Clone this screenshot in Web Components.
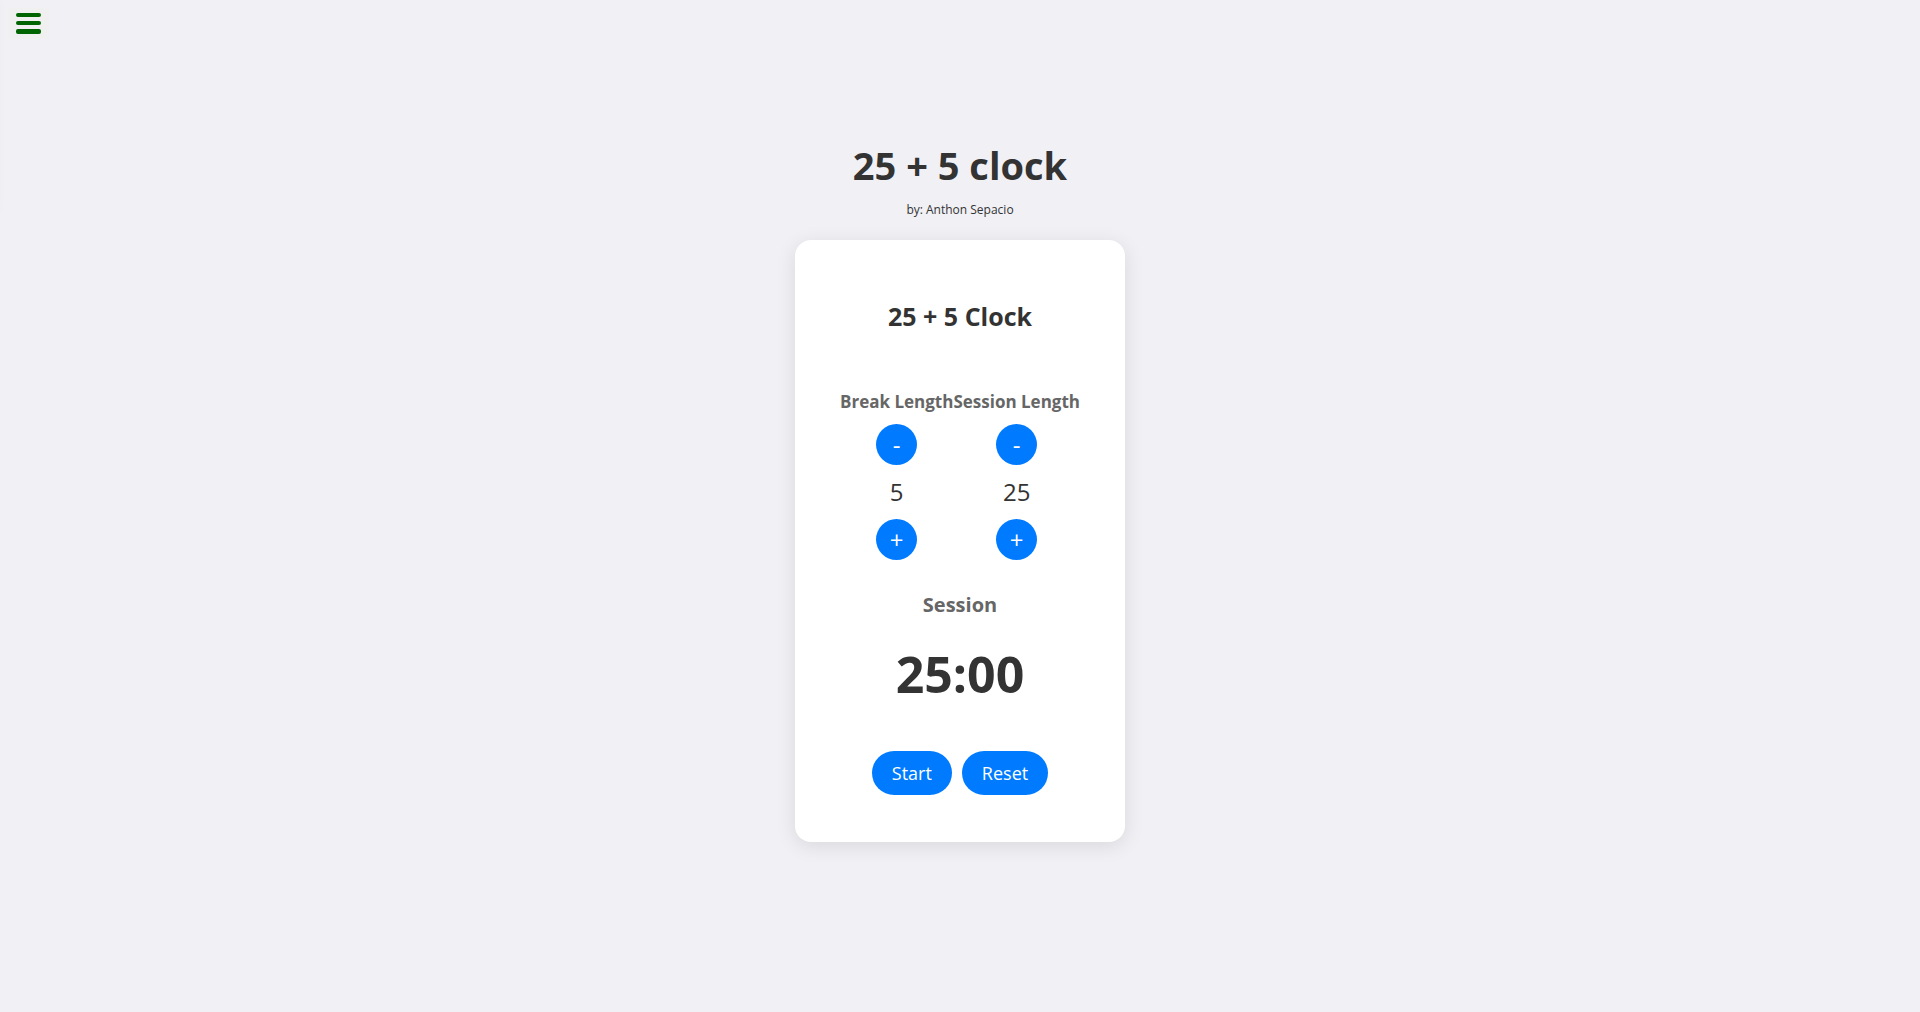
<!DOCTYPE html>
<html lang="en">
<head>
<meta charset="utf-8">
<title>25 + 5 clock</title>
<style>
  body { margin: 0; background: #f0f0f5; color: #333; font-family: "Open Sans", "Noto Sans", sans-serif; }
</style>
</head>
<body>
<clock-app></clock-app>
<script>
const define = (name, html, setup) => {
  const template = document.createElement('template');
  template.innerHTML = html;
  customElements.define(name, class extends HTMLElement {
    connectedCallback() {
      if (this.shadowRoot) return;
      this.attachShadow({ mode: 'open' }).append(template.content.cloneNode(true));
      if (setup) setup(this, this.shadowRoot);
    }
  });
};

define('menu-toggle', `
  <style>
    :host { display: block; }
    button { display: flex; padding: 5px 8px; border: 0; background: #f0f0f0; cursor: pointer; }
    svg { display: block; }
    .drawer { position: fixed; top: 0; right: 100%; width: 200px; height: 212px; box-shadow: 0 0 10px rgba(0,0,0,.02); }
  </style>
  <button type="button" aria-label="Menu">
    <svg width="25" height="21" viewBox="0 0 25 21" fill="#006400">
      <rect width="25" height="4" rx="2"/><rect y="8" width="25" height="4" rx="2"/><rect y="16" width="25" height="5" rx="2"/>
    </svg>
  </button>
  <div class="drawer"></div>`);

define('round-button', `
  <style>
    :host { display: block; }
    button { width: 41px; height: 41px; padding: 0; border: 0; border-radius: 50%; background: #007bff; color: #fff; font: 24px/41px "Open Sans", sans-serif; cursor: pointer; }
  </style>
  <button type="button"><slot></slot></button>`, (el, root) =>
    root.querySelector('button').setAttribute('aria-label', el.getAttribute('label')));

define('pill-button', `
  <style>
    :host { display: block; }
    button { padding: 0 20px; border: 0; border-radius: 22px; background: #007bff; color: #fff; font: 18px/44px "Open Sans", sans-serif; cursor: pointer; }
  </style>
  <button type="button"><slot></slot></button>`);

define('length-control', `
  <style>
    :host { display: flex; flex-direction: column; align-items: center; gap: 10px; }
    h3 { margin: 0; color: #666; font-size: 17px; line-height: 25px; white-space: nowrap; }
    .value { font-size: 24px; line-height: 34px; }
  </style>
  <h3><slot name="label"></slot></h3>
  <round-button label="Decrease">-</round-button>
  <div class="value"><slot></slot></div>
  <round-button label="Increase">+</round-button>`);

define('clock-card', `
  <style>
    :host { display: flex; flex-direction: column; align-items: center; box-sizing: border-box; width: 330px; max-width: 100%; padding: 58px 40px 47px; border-radius: 16px; background: #fff; box-shadow: 0 4px 20px rgba(0,0,0,.1); }
    h2 { margin: 0 0 55px; font-size: 25px; line-height: 36px; }
    .lengths { display: flex; justify-content: center; margin-bottom: 31px; }
    h3 { margin: 0 0 23px; color: #666; font-size: 20px; line-height: 28px; }
    .time { margin-bottom: 45px; font-size: 50px; line-height: 64px; font-weight: 700; }
    .actions { display: flex; gap: 10px; }
  </style>
  <h2>25 + 5 Clock</h2>
  <div class="lengths">
    <length-control><span slot="label">Break Length</span>5</length-control>
    <length-control><span slot="label">Session Length</span>25</length-control>
  </div>
  <h3>Session</h3>
  <div class="time" role="timer">25:00</div>
  <div class="actions"><pill-button>Start</pill-button><pill-button>Reset</pill-button></div>`);

define('clock-app', `
  <style>
    :host { display: flex; flex-direction: column; min-height: 100vh; }
    header { padding: 8px 8px 0; display: flex; height: 31px; }
    main { flex: 1; display: flex; flex-direction: column; align-items: center; justify-content: center; padding-bottom: 71px; }
    h1 { margin: 0 0 9px; font-size: 38px; line-height: 54px; }
    p { margin: 0 0 21px; font-size: 12px; line-height: 18px; }
  </style>
  <header><menu-toggle></menu-toggle></header>
  <main>
    <h1>25 + 5 clock</h1>
    <p>by: Anthon Sepacio</p>
    <clock-card></clock-card>
  </main>`);
</script>
</body>
</html>
